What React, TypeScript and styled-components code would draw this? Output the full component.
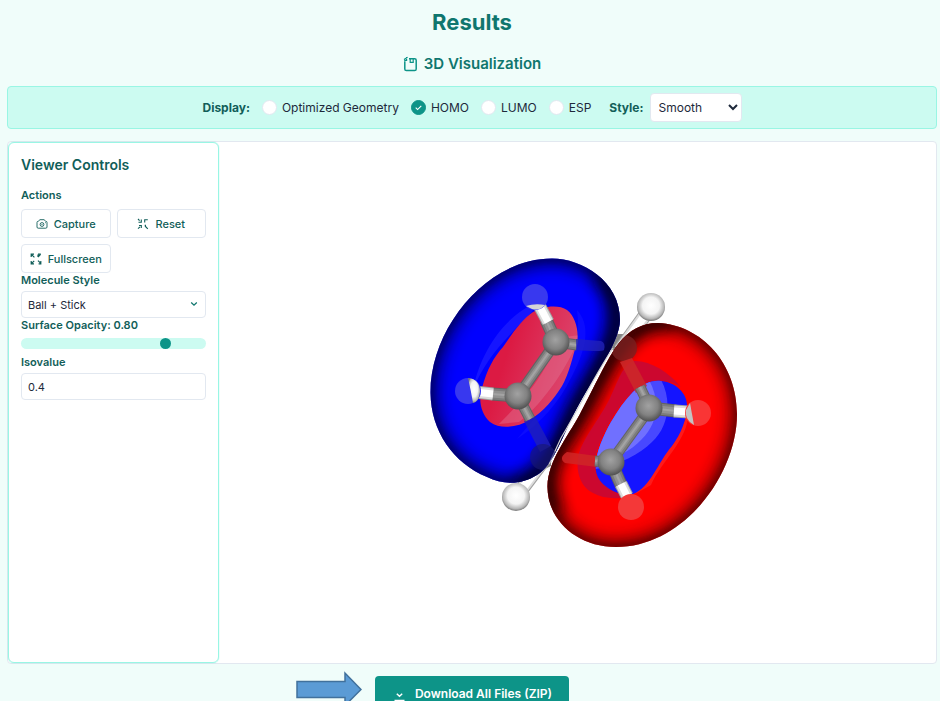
import React, { useState } from "react";
import styled, { createGlobalStyle } from "styled-components";

const GlobalStyle = createGlobalStyle`
  *, *::before, *::after { box-sizing: border-box; }
  body {
    margin: 0;
    background: #ffffff;
    color: #1e293b;
    font-family: Inter, "Liberation Sans", sans-serif;
    font-size: 12px;
    overflow: hidden;
  }
  button, input, select { font: inherit; color: inherit; margin: 0; }
`;

const Page = styled.main`
  display: flex;
  flex-direction: column;
  height: calc(100vh - 7px);
  padding: 8px 3px 0 7px;
  background: #f0fdfa;
`;

const Title = styled.h1`
  margin: 0;
  text-align: center;
  font-size: 22px;
  line-height: 28px;
  font-weight: 700;
  color: #0f766e;
`;

const Subtitle = styled.h2`
  display: flex;
  align-items: center;
  justify-content: center;
  gap: 6px;
  margin: 16px 0 10px;
  font-size: 15px;
  line-height: 24px;
  font-weight: 600;
  color: #0f766e;
`;

const DisplayBar = styled.div`
  display: flex;
  flex: none;
  align-items: center;
  justify-content: center;
  gap: 18px;
  height: 43px;
  border: 1px solid #99f6e4;
  border-radius: 4px;
  background: #ccfbf1;
`;

const Group = styled.div`
  display: flex;
  align-items: center;
  gap: 12px;
`;

const BarLabel = styled.span`
  font-weight: 700;
  color: #115e59;
`;

const RadioLabel = styled.label`
  display: flex;
  align-items: center;
  gap: 5px;
`;

const Radio = styled.input`
  appearance: none;
  width: 15px;
  height: 15px;
  border: 1px solid #e2e8f0;
  border-radius: 50%;
  background: #ffffff;
  &:checked {
    border-color: #0d9488;
    background: #0d9488
      url("data:image/svg+xml,%3Csvg xmlns='http://www.w3.org/2000/svg' viewBox='0 0 14 14' fill='none' stroke='white' stroke-width='1.2'%3E%3Cpath d='M4 7.2l2 2 4-4'/%3E%3C/svg%3E");
  }
`;

const StyleSelect = styled.select`
  width: 92px;
  height: 29px;
  padding: 0 4px;
  border: 1px solid #e2e8f0;
  border-radius: 4px;
  background: #ffffff;
`;

const StyleField = styled.label`
  display: flex;
  align-items: center;
  gap: 6px;
`;

const Viewer = styled.section`
  display: flex;
  flex: 1;
  min-height: 0;
  margin: 12px 0;
  border: 1px solid #e2e8f0;
  border-radius: 4px;
  background: #ffffff;
`;

const Sidebar = styled.aside`
  flex: none;
  width: 211px;
  padding: 12px;
  border: 1px solid #99f6e4;
  border-radius: 6px;
  box-shadow: 0 0 1px #5eead4;
`;

const SidebarTitle = styled.h3`
  margin: 0 0 13px;
  font-size: 14px;
  line-height: 20px;
  font-weight: 600;
  color: #115e59;
`;

const FieldLabel = styled.label`
  display: block;
  font-size: 11px;
  line-height: 14px;
  font-weight: 600;
  color: #115e59;
`;

const ActionGrid = styled.div`
  display: grid;
  grid-template-columns: 1fr 1fr;
  gap: 6px;
  margin-top: 7px;
`;

const ActionButton = styled.button`
  display: flex;
  align-items: center;
  justify-content: center;
  gap: 6px;
  height: 29px;
  padding: 0;
  border: 1px solid #e2e8f0;
  border-radius: 4px;
  background: #ffffff;
  font-size: 11px;
  font-weight: 500;
  color: #115e59;
`;

const SelectWrap = styled.div`
  position: relative;
  margin: 4px 0 0;
  svg {
    position: absolute;
    right: 8px;
    top: 9px;
    pointer-events: none;
  }
`;

const MoleculeSelect = styled.select`
  display: block;
  appearance: none;
  width: 100%;
  height: 27px;
  padding: 0 6px;
  border: 1px solid #e2e8f0;
  border-radius: 4px;
  background: #ffffff;
  font-size: 11px;
`;

const Slider = styled.input`
  display: block;
  appearance: none;
  width: 100%;
  height: 11px;
  margin: 6px 0;
  border-radius: 6px;
  background: #ccfbf1;
  &::-webkit-slider-thumb {
    appearance: none;
    width: 11px;
    height: 11px;
    border-radius: 50%;
    background: #0d9488;
  }
`;

const NumberField = styled.input`
  display: block;
  width: 100%;
  height: 27px;
  margin-top: 4px;
  padding: 0 6px;
  border: 1px solid #e2e8f0;
  border-radius: 4px;
  background: #ffffff;
  font-size: 11px;
`;

const Canvas = styled.div`
  display: flex;
  flex: 1;
  align-items: center;
  justify-content: center;
`;

const Footer = styled.footer`
  display: flex;
  flex: none;
  justify-content: center;
`;

const DownloadSlot = styled.div`
  position: relative;
`;

const DownloadClip = styled.div`
  height: 25px;
  overflow: hidden;
`;

const DownloadButton = styled.button`
  display: flex;
  align-items: center;
  gap: 8px;
  height: 35px;
  padding: 0 17px;
  border: 0;
  border-radius: 4px;
  background: #0d9488;
  font-weight: 600;
  color: #ffffff;
`;

const Pointer = styled.svg`
  position: absolute;
  right: 100%;
  top: -5px;
  margin-right: 13px;
`;

const SaveIcon = () => (
  <svg width="15" height="16" viewBox="0 0 15 16" fill="none" stroke="#0d9488" strokeWidth="1.5">
    <path d="M6 2.7H11.6Q13.2 2.7 13.2 4.3V13Q13.2 14.6 11.6 14.6H3.4Q1.8 14.6 1.8 13V5.2" />
    <path d="M7.2 3V6.3H10.2V3M1 3.6L4.6 1.2M3.6 1V4.4H1.2" strokeWidth="1.2" />
  </svg>
);

const CameraIcon = () => (
  <svg width="12" height="12" viewBox="0 0 12 12" fill="none" stroke="#115e59" strokeWidth=".9">
    <path d="M1 4.5Q1 3.3 2.3 3.2L4 1.7H8L9.7 3.2Q11 3.3 11 4.5V9Q11 10.2 9.8 10.2H2.2Q1 10.2 1 9Z" />
    <circle cx="6" cy="6.5" r="1.9" />
    <path d="M5.5 6.5h1M9 4.7h.8" />
  </svg>
);

const ResetIcon = () => (
  <svg width="12" height="12" viewBox="0 0 12 12" fill="none" stroke="#115e59" strokeWidth="1.1">
    <path d="M1 1L2.6 2.6M4.3 1.4V4.2H1.5M7.7 4.6V1.8H10.8M1 10.6L3 8.8M2 7.5H4.3V10M7.7 7.4H9M8 8L10.8 10.8" />
  </svg>
);

const FullscreenIcon = () => (
  <svg width="12" height="12" viewBox="0 0 12 12" fill="none" stroke="#115e59" strokeWidth="1.2">
    <path d="M1.2 4V1.2H4M1.4 1.4L4.4 4.4M8 1.2H10.8M8 4V1.6M10.6 1.4L8 4M1.2 8V10.8H4M1.4 10.6L4.2 7.8M8 7.6L10.8 10.4M10.8 8V10.8H8.6" />
  </svg>
);

const ChevronIcon = () => (
  <svg width="8" height="8" viewBox="0 0 8 8" fill="none" stroke="#0f766e" strokeWidth="1.3">
    <path d="M1.2 2.6L4 5.2L6.8 2.6" />
  </svg>
);

const DownloadIcon = () => (
  <svg width="15" height="16" viewBox="0 0 15 16" fill="none" stroke="#ffffff" strokeWidth="1.5">
    <path d="M4.8 7.8L7.500 10.2L10.2 7.8M2.500 14.500H12.500" />
  </svg>
);

const BLUE_LOBE =
  "M552 258.5C582 258.5 620 281 620 320C620 342 592 380 577 408C563 434 554 465 537 475C521 485 504 485 487 477C453 463 431 431 430.5 393C430 328 487 258.5 552 258.5Z";
const RED_LOBE =
  "M658 323C702 325 737 364 737 414C737 474 684 547 616 547C577 547 547 520 547.500 486C548 461 567 438 580 414C594 388 607 358 619 343C629 330 642 323 658 323Z";
const RED_CORE =
  "M533 312C542 306 559 304 567 310C576 317 579 332 577 342C573 356 569 374 562 386C554 399 544 411 530 420C518 427 501 430 490 422C481 414 478 400 482 388C487 369 494 357 503 347C512 334 522 319 533 312Z";
const BLUE_CORE =
  "M633 392C643 384 651 380 661 381C675 382 687 393 687 405C687 419 681 434 672 446C658 462 650 488 633 494C620 497 601 487 597 475C592 461 602 438 611 422C618 410 625 400 633 392Z";
const VEIL =
  "M634 361C649 360 669 372 681 387C669 379 650 378 634 391C616 406 602 435 597 451C591 470 597 487 634 495C619 500 604 499 593 493C579 486 575 468 579 453C584 437 602 415 610 398C617 384 623 363 634 361Z";

type BondProps = { from: [number, number]; to: [number, number]; white?: boolean; wide?: number };

const Bond = ({ from, to, white, wide = 11 }: BondProps) => {
  const line = { x1: from[0], y1: from[1], x2: to[0], y2: to[1] };
  return (
    <g>
      <line {...line} stroke={white ? "#a0a0a0" : "#626262"} strokeWidth={wide} />
      <line {...line} stroke={white ? "#dcdcdc" : "#7c7c7c"} strokeWidth={wide - 2} />
      <line {...line} stroke={white ? "#ffffff" : "#929292"} strokeWidth={wide - 6} />
      {!white && <line {...line} stroke="#a4a4a4" strokeWidth="2" />}
    </g>
  );
};

const Orbital = () => (
  <svg width="320" height="300" viewBox="418 253 320 300" role="img" aria-label="HOMO orbital of benzene">
    <defs>
      <radialGradient id="carbon" cx=".48" cy=".42" r=".58">
        <stop offset="0" stopColor="#a2a2a2" />
        <stop offset=".6" stopColor="#828282" />
        <stop offset="1" stopColor="#505050" />
      </radialGradient>
      <radialGradient id="hydrogen" cx=".5" cy=".45" r=".55">
        <stop offset="0" stopColor="#ffffff" />
        <stop offset=".55" stopColor="#f4f4f4" />
        <stop offset=".85" stopColor="#b8b8b8" />
        <stop offset="1" stopColor="#787878" />
      </radialGradient>
      <linearGradient id="redCoreFill" x1="0" y1=".2" x2="1" y2=".6">
        <stop offset=".3" stopColor="#dc1a43" />
        <stop offset="1" stopColor="#dc4a72" />
      </linearGradient>
      <filter id="soft" filterUnits="userSpaceOnUse" x="400" y="230" width="360" height="340">
        <feGaussianBlur stdDeviation="8" />
      </filter>
      <filter id="faint" filterUnits="userSpaceOnUse" x="400" y="230" width="360" height="340">
        <feGaussianBlur stdDeviation="3" />
      </filter>
      <clipPath id="blueClip"><path d={BLUE_LOBE} /></clipPath>
      <clipPath id="redClip"><path d={RED_LOBE} /></clipPath>
      <clipPath id="blueCoreClip"><path d={BLUE_CORE} /></clipPath>
      <clipPath id="redCoreClip"><path d={RED_CORE} /></clipPath>
    </defs>

    <path d="M608 336L616 334H634V350H608ZM533 455L551 456V466L545 469L533 467Z" fill="#858585" />
    <Bond from={[620, 350]} to={[651, 307]} white wide={14} />
    <Bond from={[546, 457]} to={[516, 497]} white wide={14} />
    <circle cx="651" cy="307" r="14" fill="url(#hydrogen)" />
    <circle cx="516" cy="497" r="14" fill="url(#hydrogen)" />

    <path d={BLUE_LOBE} fill="#0000ff" />
    <g clipPath="url(#blueClip)" fill="none">
      <path d={BLUE_LOBE} stroke="#000030" strokeWidth="14" opacity=".75" filter="url(#soft)" />
      <path d="M600 272C642 322 591 378 575 412C559 446 548 476 515 489" stroke="#000018" strokeWidth="16" opacity=".9" filter="url(#soft)" />
      <path d={BLUE_LOBE} stroke="#000040" strokeWidth="4" opacity=".8" filter="url(#faint)" />
      <path d="M536 303C508 314 481 348 473 390C485 359 506 338 532 312Z" fill="#2929ff" opacity=".5" />
      <path d="M577 310C590 324 588 346 572 376C559 403 540 424 517 439C532 421 551 401 563 381C576 356 580 330 577 310Z" fill="#2020ff" opacity=".35" />
    </g>

    <path d={RED_LOBE} fill="#ff0000" />
    <g clipPath="url(#redClip)" fill="none">
      <path d={RED_LOBE} stroke="#300000" strokeWidth="14" opacity=".75" filter="url(#soft)" />
      <path d="M672 320C619 314 595 391 575 420C555 454 535 465 555 515" stroke="#180000" strokeWidth="16" opacity=".9" filter="url(#soft)" />
      <path d={RED_LOBE} stroke="#400000" strokeWidth="4" opacity=".8" filter="url(#faint)" />
      <path d="M688 414C689 438 661 462 651 485L635 494C649 473 659 459 674 443Z" fill="#ff2929" opacity=".6" />
    </g>
    <path d="M613 348C594 376 577 412 561 438L549 464" fill="none" stroke="#d0d0d0" strokeWidth="1.2" />

    <path d={VEIL} fill="#c80833" opacity=".92" />
    <path d={RED_CORE} fill="url(#redCoreFill)" />
    <g clipPath="url(#redCoreClip)">
      <path d="M556 338L580 335C567 370 541 405 519 422L499 424C529 394 550 369 556 338Z" fill="#e07a98" opacity=".4" />
    </g>
    <path d={BLUE_CORE} fill="#1414ff" />
    <g clipPath="url(#blueCoreClip)">
      <path d="M590 365H650C675 390 671 425 652 442C639 455 617 466 590 470Z" fill="#4848ff" />
      <path d="M590 365H638C662 391 661 420 642 439C630 452 614 460 590 461Z" fill="#7070ff" />
    </g>

    <Bond from={[556, 342]} to={[577, 345]} />
    <path d="M576 339L601 341Q606 343 604 350Q602 352 576 350Z" fill="#2424bb" opacity=".75" />
    <path d="M524 421L535 416L551 446L540 452Z" fill="#2020b8" opacity=".8" />
    <circle cx="543" cy="457" r="13" fill="#181872" opacity=".65" clipPath="url(#blueClip)" />
    <Bond from={[518, 396]} to={[530, 419]} />
    <circle cx="624" cy="348" r="13" fill="#782020" opacity=".8" clipPath="url(#redClip)" />
    <path d="M620 362L632 358L647 386L636 393Z" fill="#cb2929" opacity=".85" />
    <Bond from={[640, 387]} to={[650, 408]} />
    <path d="M597 456L567 452Q558 458 565 463L597 467Z" fill="#cf2626" opacity=".85" />
    <Bond from={[595, 461]} to={[611, 462]} />

    <Bond from={[556, 342]} to={[518, 396]} />
    <Bond from={[556, 342]} to={[546, 320]} wide={13} />
    <Bond from={[548, 322]} to={[539, 305]} white wide={13} />
    <Bond from={[518, 396]} to={[492, 394]} wide={13} />
    <Bond from={[493, 394]} to={[475, 392]} white wide={13} />
    <Bond from={[650, 408]} to={[611, 462]} />
    <Bond from={[650, 408]} to={[676, 411]} wide={13} />
    <Bond from={[674, 411]} to={[689, 412]} white wide={13} />
    <Bond from={[611, 462]} to={[622, 487]} wide={13} />
    <Bond from={[621, 484]} to={[627, 496]} white wide={13} />

    <circle cx="556" cy="342" r="13.500" fill="url(#carbon)" />
    <circle cx="518" cy="396" r="13.500" fill="url(#carbon)" />
    <circle cx="649" cy="408" r="13.500" fill="url(#carbon)" />
    <circle cx="611" cy="462" r="13.500" fill="url(#carbon)" />

    <circle cx="535" cy="297" r="13" fill="#3838ef" />
    <path d="M526 306Q535 303 545 305Q540 311 532 309Z" fill="#d5d5d5" />
    <circle cx="468" cy="391" r="13" fill="#3838ef" />
    <path d="M468 378Q480 379 480 392Q479 402 473 403Q471 391 468 378Z" fill="url(#hydrogen)" />
    <circle cx="698" cy="413" r="13" fill="#f93535" />
    <path d="M690 403Q692 414 694 425Q684 419 686 410Z" fill="#c3c3c3" />
    <circle cx="631" cy="507" r="13" fill="#f43838" />
  </svg>
);

const DISPLAY_MODES = ["Optimized Geometry", "HOMO", "LUMO", "ESP"];

export default function App() {
  const [mode, setMode] = useState("HOMO");
  const [opacity, setOpacity] = useState(0.8);
  const [isovalue, setIsovalue] = useState("0.4");

  return (
    <>
      <GlobalStyle />
      <Page>
        <Title>Results</Title>
        <Subtitle><SaveIcon />3D Visualization</Subtitle>
        <DisplayBar>
          <Group role="radiogroup" aria-label="Display">
            <BarLabel>Display:</BarLabel>
            {DISPLAY_MODES.map((name) => (
              <RadioLabel key={name}>
                <Radio type="radio" name="display" checked={mode === name} onChange={() => setMode(name)} />
                {name}
              </RadioLabel>
            ))}
          </Group>
          <StyleField>
            <BarLabel>Style:</BarLabel>
            <StyleSelect defaultValue="Smooth">
              <option>Smooth</option>
              <option>Mesh</option>
            </StyleSelect>
          </StyleField>
        </DisplayBar>
        <Viewer>
          <Sidebar>
            <SidebarTitle>Viewer Controls</SidebarTitle>
            <FieldLabel as="div">Actions</FieldLabel>
            <ActionGrid>
              <ActionButton><CameraIcon />Capture</ActionButton>
              <ActionButton><ResetIcon />Reset</ActionButton>
              <ActionButton><FullscreenIcon />Fullscreen</ActionButton>
            </ActionGrid>
            <FieldLabel htmlFor="molecule-style">Molecule Style</FieldLabel>
            <SelectWrap>
              <MoleculeSelect id="molecule-style" defaultValue="Ball + Stick">
                <option>Ball + Stick</option>
                <option>Stick</option>
              </MoleculeSelect>
              <ChevronIcon />
            </SelectWrap>
            <FieldLabel htmlFor="opacity">Surface Opacity: {opacity.toFixed(2)}</FieldLabel>
            <Slider
              id="opacity"
              type="range"
              min="0"
              max="1"
              step="0.05"
              value={opacity}
              onChange={(event) => setOpacity(Number(event.target.value))}
            />
            <FieldLabel htmlFor="isovalue">Isovalue</FieldLabel>
            <NumberField id="isovalue" value={isovalue} onChange={(event) => setIsovalue(event.target.value)} />
          </Sidebar>
          <Canvas><Orbital /></Canvas>
        </Viewer>
        <Footer>
          <DownloadSlot>
            <Pointer width="66" height="36" viewBox="0 0 66 36" aria-hidden="true">
              <path d="M1 10.500H49V2L65 18.500L49 34.500V26.500H1Z" fill="#5b9bd5" stroke="#41719c" strokeWidth="1.5" />
            </Pointer>
            <DownloadClip>
              <DownloadButton><DownloadIcon />Download All Files (ZIP)</DownloadButton>
            </DownloadClip>
          </DownloadSlot>
        </Footer>
      </Page>
    </>
  );
}
